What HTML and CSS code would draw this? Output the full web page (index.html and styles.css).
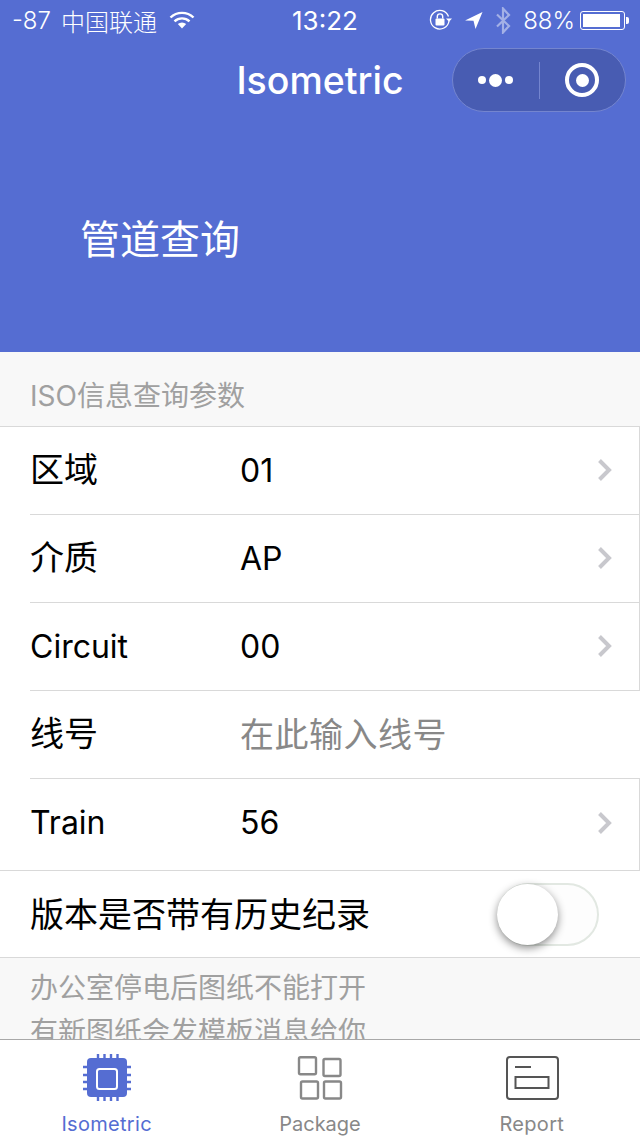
FILE: index.html
```html
<!DOCTYPE html>
<html lang="zh">
<head>
<meta charset="utf-8">
<title>Isometric</title>
<link rel="stylesheet" href="styles.css">
</head>
<body>
<div class="page">
  <header class="hero">
    <div class="status">
      <div class="status-left">
        <span>-87</span><span class="carrier">中国联通</span>
        <svg class="wifi" width="26" height="18" viewBox="0 0 26 18"><path d="M1.5 6.5a16.5 16.5 0 0 1 23 0" fill="none" stroke="#fff" stroke-width="2.4"/><path d="M5.5 10.3a11 11 0 0 1 15 0" fill="none" stroke="#fff" stroke-width="2.4"/><path d="M13 17.5l-4.2-4.4a6 6 0 0 1 8.4 0z" fill="#fff"/></svg>
      </div>
      <div class="status-time">13:22</div>
      <div class="status-right">
        <svg class="ico-lock" width="24" height="22" viewBox="0 0 24 22"><path d="M19.5 7.5A9.3 9.3 0 1 0 20 12" fill="none" stroke="#fff" stroke-width="1.3"/><path d="M17 9.5h6l-3 3.2z" fill="#fff"/><rect x="6.5" y="9.5" width="9" height="7" rx="1" fill="#fff"/><path d="M8.3 9.5V7.6a2.7 2.7 0 0 1 5.4 0v1.900" fill="none" stroke="#fff" stroke-width="1.400"/></svg>
        <svg class="ico-loc" width="19" height="19" viewBox="0 0 19 19"><path d="M18.500 1L1 9.500l8.500.3 2 8.200z" fill="#fff"/></svg>
        <svg class="ico-bt" width="16" height="27" viewBox="0 0 16 27"><path d="M2 7.500l12 11.500-6 6.500V1.500l6 6.500L2 19.500" fill="none" stroke="#a3b0e6" stroke-width="2.200"/></svg>
        <span class="battery-pct">88%</span>
        <span class="battery"><span class="battery-fill"></span></span><span class="battery-cap"></span>
      </div>
    </div>
    <div class="nav">
      <h1 class="nav-title">Isometric</h1>
      <div class="capsule">
        <div class="capsule-cell">
          <span class="dot"></span><span class="dot dot-big"></span><span class="dot"></span>
        </div>
        <span class="capsule-sep"></span>
        <div class="capsule-cell">
          <span class="target"><span class="target-core"></span></span>
        </div>
      </div>
    </div>
    <div class="hero-title">管道查询</div>
  </header>

  <main class="content">
    <div class="section-label">ISO信息查询参数</div>
    <div class="list">
      <div class="row row-link">
        <span class="row-name cjk">区域</span><span class="row-value">01</span>
        <svg class="chev" width="16" height="24" viewBox="0 0 16 24"><path d="M2.500 2.500L12 12l-9.500 9.500" fill="none" stroke="#c8c8cd" stroke-width="4"/></svg>
      </div>
      <div class="row row-link">
        <span class="row-name cjk">介质</span><span class="row-value">AP</span>
        <svg class="chev" width="16" height="24" viewBox="0 0 16 24"><path d="M2.500 2.500L12 12l-9.500 9.500" fill="none" stroke="#c8c8cd" stroke-width="4"/></svg>
      </div>
      <div class="row row-link">
        <span class="row-name">Circuit</span><span class="row-value">00</span>
        <svg class="chev" width="16" height="24" viewBox="0 0 16 24"><path d="M2.500 2.500L12 12l-9.500 9.500" fill="none" stroke="#c8c8cd" stroke-width="4"/></svg>
      </div>
      <div class="row">
        <span class="row-name cjk">线号</span><span class="row-value row-placeholder cjk">在此输入线号</span>
      </div>
      <div class="row row-link row-last">
        <span class="row-name">Train</span><span class="row-value">56</span>
        <svg class="chev" width="16" height="24" viewBox="0 0 16 24"><path d="M2.500 2.500L12 12l-9.500 9.500" fill="none" stroke="#c8c8cd" stroke-width="4"/></svg>
      </div>
    </div>
    <div class="switch-row">
      <span class="row-name cjk">版本是否带有历史纪录</span>
      <span class="switch"><span class="switch-knob"></span></span>
    </div>
    <div class="notes">
      <div>办公室停电后图纸不能打开</div>
      <div>有新图纸会发模板消息给你</div>
    </div>
  </main>

  <nav class="tabbar">
    <div class="tab tab-active">
      <svg class="tab-icon" width="50" height="50" viewBox="0 0 50 50">
        <g stroke="#556dd2" stroke-width="2.400">
          <path d="M16 -1v47M22.500 -1v47M29 -1v47M35.500 -1v47"/>
          <path d="M1 12h48M1 20h48M1 27h48M1 34h48"/>
        </g>
        <rect x="5" y="3" width="40" height="39" rx="4" fill="#556dd2"/>
        <rect x="15" y="14" width="20" height="20" rx="2.500" fill="#556dd2" stroke="#fff" stroke-width="2"/>
      </svg>
      <span class="tab-label">Isometric</span>
    </div>
    <div class="tab tab-package">
      <svg class="tab-icon" width="50" height="50" viewBox="0 0 50 50" fill="none" stroke="#888" stroke-width="2.400">
        <rect x="4" y="2.200" width="17" height="17" rx="1.500"/><rect x="28.500" y="4" width="17" height="17" rx="1.500"/>
        <rect x="6" y="26.500" width="17" height="17" rx="1.500"/><rect x="29" y="26.500" width="17" height="17" rx="1.500"/>
      </svg>
      <span class="tab-label">Package</span>
    </div>
    <div class="tab tab-report">
      <svg class="tab-icon" width="54" height="50" viewBox="0 0 54 50" fill="none" stroke="#555" stroke-width="2">
        <rect x="2" y="2" width="51" height="42" rx="3"/>
        <path d="M10 12h16"/>
        <rect x="10.500" y="22" width="33" height="11"/>
      </svg>
      <span class="tab-label">Report</span>
    </div>
  </nav>
</div>
</body>
</html>
```
FILE: styles.css
```css
* { box-sizing: border-box; }
html, body { margin: 0; padding: 0; }
body {
  font-family: Inter, "Noto Sans CJK SC", sans-serif;
  background: #f8f8f8;
}
.page {
  width: 640px;
  height: 1136px;
  display: flex;
  flex-direction: column;
  overflow: hidden;
}
.hero {
  height: 352px;
  flex: none;
  background: #556dd2;
  color: #fff;
}
.status {
  height: 40px;
  display: flex;
  align-items: center;
  justify-content: space-between;
  padding: 0 11px 0 12px;
  font-size: 24px;
  font-weight: 300;
  position: relative;
}
.status-left, .status-right { display: flex; align-items: center; }
.carrier { margin-left: 10px; }
.wifi { margin-left: 12px; }
.status-time {
  position: absolute;
  left: 292px;
  font-size: 26px;
  font-weight: 400;
}
.ico-lock { margin-right: 11px; }
.ico-loc { margin-right: 12px; }
.ico-bt { margin-right: 13px; }
.battery-pct { margin-right: 5px; margin-left: -1px; }
.battery {
  width: 45px;
  height: 19px;
  border: 1px solid #fff;
  border-radius: 3px;
  padding: 2px;
  display: block;
}
.battery-fill { display: block; width: 37px; height: 13px; background: #fff; }
.battery-cap {
  width: 3px;
  height: 7px;
  background: #fff;
  border-radius: 0 2px 2px 0;
  margin-left: 1px;
}
.nav {
  height: 80px;
  position: relative;
  display: flex;
  align-items: center;
  justify-content: center;
}
.nav-title {
  margin: 0;
  font-size: 37.5px;
  font-weight: 500;
}
.capsule {
  position: absolute;
  left: 452px;
  top: 8px;
  width: 174px;
  height: 64px;
  border-radius: 32px;
  background: #485cb2;
  border: 1px solid #7485cf;
  display: flex;
  align-items: center;
}
.capsule-cell {
  flex: 1;
  display: flex;
  align-items: center;
  justify-content: center;
  gap: 3px;
}
.capsule-sep { width: 1px; height: 37px; background: #7485cf; }
.dot { width: 8px; height: 8px; border-radius: 50%; background: #fff; }
.dot-big { width: 13px; height: 13px; }
.target {
  width: 34px;
  height: 34px;
  border: 4px solid #fff;
  border-radius: 50%;
  display: flex;
  align-items: center;
  justify-content: center;
}
.target-core { width: 13px; height: 13px; border-radius: 50%; background: #fff; }
.hero-title {
  padding: 96px 0 0 80px;
  font-size: 40px;
  line-height: 48px;
}
.content {
  flex: 1;
  overflow: hidden;
  min-height: 0;
}
.section-label {
  height: 74px;
  padding: 27px 0 0 30px;
  font-size: 28px;
  line-height: 34px;
  color: #a0a0a0;
}
.list {
  background: #fff;
  border-top: 1px solid #d9d9d9;
  border-bottom: 1px solid #d9d9d9;
}
.row {
  height: 88px;
  padding: 0 0 2px 30px;
  display: flex;
  align-items: center;
  position: relative;
  font-size: 32px;
}
.row::after {
  content: "";
  position: absolute;
  left: 30px;
  right: 0;
  bottom: 0;
  height: 1px;
  background: #d9d9d9;
}
.row-link { border-right: 1px solid #d9d9d9; }
.row-last { height: 91px; padding-bottom: 4px; }
.row-last::after { display: none; }
.row-name { width: 210px; flex: none; color: #000; font-size: 32px; }
.row-value { flex: 1; color: #000; }
.row-name.cjk, .row-value.cjk {
  font-family: "Noto Sans CJK SC", sans-serif;
  font-size: 34px;
  line-height: 44px;
  padding-bottom: 4px;
}
.row-placeholder.cjk { color: #888; letter-spacing: 0.5px; padding-bottom: 2px; }
.chev { margin-right: 26px; }
.switch-row {
  height: 87px;
  background: #fff;
  border-bottom: 1px solid #d9d9d9;
  display: flex;
  align-items: center;
  justify-content: space-between;
  padding: 0 41px 0 30px;
}
.switch-row .row-name { width: auto; padding-bottom: 2px; }
.switch {
  width: 102px;
  height: 63px;
  border-radius: 32px;
  border: 2px solid #e2e8e2;
  background: #fdfdfd;
  position: relative;
  display: block;
}
.switch-knob {
  position: absolute;
  left: -2px;
  top: -1px;
  width: 61px;
  height: 61px;
  border-radius: 50%;
  background: #fff;
  box-shadow: 0 3px 8px rgba(0, 0, 0, 0.45);
}
.notes {
  padding: 8px 0 0 30px;
  font-size: 28px;
  line-height: 44px;
  color: #a0a0a0;
}
.tabbar {
  height: 97px;
  flex: none;
  background: #fff;
  border-top: 1px solid #a8a8a8;
  display: grid;
  grid-template-columns: repeat(3, 1fr);
}
.tab {
  display: flex;
  flex-direction: column;
  align-items: center;
  padding-top: 15px;
  color: #888;
}
.tab-icon { display: block; height: 50px; overflow: visible; }
.tab-label {
  font-size: 20px;
  line-height: 26px;
  margin-top: 6px;
  letter-spacing: 0.3px;
}
.tab-active { color: #556dd2; }
.tab-package .tab-label { letter-spacing: 0; }
.tab-report { padding-right: 3px; }
```
